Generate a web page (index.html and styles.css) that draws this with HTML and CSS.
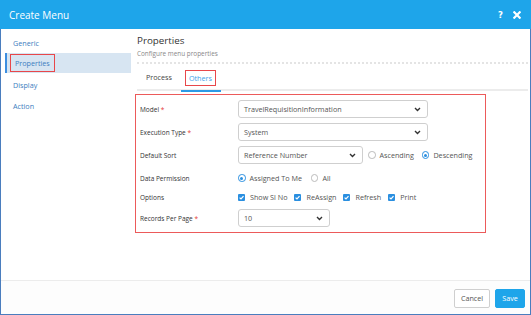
FILE: index.html
```html
<!DOCTYPE html>
<html>
<head>
<meta charset="utf-8">
<link rel="stylesheet" href="styles.css">
</head>
<body>
<div class="dialog">
  <div class="header">
    <span class="title">Create Menu</span>
    <span class="hicons">
      <span class="help">?</span>
      <svg class="close" width="8" height="8" viewBox="0 0 8 8"><path d="M1.3 1.3 L6.7 6.7 M6.7 1.3 L1.3 6.7" stroke="#fff" stroke-width="2.2" stroke-linecap="square"/></svg>
    </span>
  </div>
  <div class="body">
    <div class="nav">
      <div class="nav-item">Generic</div>
      <div class="nav-item active"><span class="mark">Properties</span></div>
      <div class="nav-item">Display</div>
      <div class="nav-item">Action</div>
    </div>
    <div class="content">
      <div class="page-title">Properties</div>
      <div class="page-sub">Configure menu properties</div>
      <div class="tabs">
        <div class="tab">Process</div>
        <div class="tab active"><span class="mark">Others</span></div>
      </div>
      <div class="form">
        <div class="row r1">
          <div class="label">Model <span class="req">*</span></div>
          <div class="select w190">TravelRequisitionInformation<svg class="chev" width="7" height="5" viewBox="0 0 7 5"><path d="M1 1 L3.5 3.5 L6 1" fill="none" stroke="#333" stroke-width="1.4"/></svg></div>
        </div>
        <div class="row r2">
          <div class="label">Execution Type <span class="req">*</span></div>
          <div class="select w190">System<svg class="chev" width="7" height="5" viewBox="0 0 7 5"><path d="M1 1 L3.5 3.5 L6 1" fill="none" stroke="#333" stroke-width="1.4"/></svg></div>
        </div>
        <div class="row r3">
          <div class="label">Default Sort</div>
          <div class="select w125">Reference Number<svg class="chev" width="7" height="5" viewBox="0 0 7 5"><path d="M1 1 L3.5 3.5 L6 1" fill="none" stroke="#333" stroke-width="1.4"/></svg></div>
          <label class="opt sort1"><span class="radio"></span>Ascending</label>
          <label class="opt"><span class="radio on"></span>Descending</label>
        </div>
        <div class="row r4">
          <div class="label">Data Permission</div>
          <label class="opt"><span class="radio on"></span>Assigned To Me</label>
          <label class="opt all"><span class="radio"></span>All</label>
        </div>
        <div class="row r5">
          <div class="label">Options</div>
          <label class="opt chk"><span class="check"><svg width="7" height="7" viewBox="0 0 7 7"><path d="M1.6 3.6 L3 5 L5.5 2.2" fill="none" stroke="#fff" stroke-width="1.2"/></svg></span>Show Sl No</label>
          <label class="opt chk"><span class="check"><svg width="7" height="7" viewBox="0 0 7 7"><path d="M1.6 3.6 L3 5 L5.5 2.2" fill="none" stroke="#fff" stroke-width="1.2"/></svg></span>ReAssign</label>
          <label class="opt chk"><span class="check"><svg width="7" height="7" viewBox="0 0 7 7"><path d="M1.6 3.6 L3 5 L5.5 2.2" fill="none" stroke="#fff" stroke-width="1.2"/></svg></span>Refresh</label>
          <label class="opt chk"><span class="check"><svg width="7" height="7" viewBox="0 0 7 7"><path d="M1.6 3.6 L3 5 L5.5 2.2" fill="none" stroke="#fff" stroke-width="1.2"/></svg></span>Print</label>
        </div>
        <div class="row r6">
          <div class="label">Records Per Page <span class="req">*</span></div>
          <div class="select w92">10<svg class="chev" width="7" height="5" viewBox="0 0 7 5"><path d="M1 1 L3.5 3.5 L6 1" fill="none" stroke="#333" stroke-width="1.4"/></svg></div>
        </div>
      </div>
    </div>
  </div>
  <div class="footer">
    <button class="btn cancel">Cancel</button>
    <button class="btn save">Save</button>
  </div>
</div>
</body>
</html>
```
FILE: styles.css
```css
* { box-sizing: border-box; }
html, body { margin: 0; padding: 0; background: #fff; }
body { width: 531px; height: 315px; overflow: hidden; font-family: "Open Sans", "Noto Sans", sans-serif; color: #333; }

.dialog {
  width: 531px; height: 315px;
  display: flex; flex-direction: column;
  border: 1px solid #4a7dbe; border-top: 0;
}
.header {
  height: 29px; flex: none;
  background: #1ea5ea;
  display: flex; align-items: center; justify-content: space-between;
  padding: 0 10px 0 9px;
  margin: 0 -1px;
}
.title { color: #fff; font-size: 10px; }
.hicons { display: flex; align-items: center; gap: 10px; }
.help { color: #fff; font-weight: bold; font-size: 8.5px; font-family: "DejaVu Sans", sans-serif; }
.close { display: block; }

.body { flex: 1; display: flex; }
.nav { width: 130px; flex: none; padding-top: 3px; }
.nav-item {
  height: 21px; display: flex; align-items: center;
  padding-left: 12px; font-size: 7.2px; color: #3d7ec0;
}
.nav-item.active {
  margin-left: 4px; padding-left: 3px;
  border-left: 2px solid #3d8ee0;
  background: #d7e5f2;
  height: 20px; margin-bottom: 1px;
}
.mark { border: 1px solid #e8474a; padding: 2px 4px 2px 4px; line-height: 12px; }
.nav-item .mark { padding: 2px 4px; }

.content { flex: 1; padding: 0 2px 0 6px; }
.page-title { font-size: 9.8px; color: #333; margin-top: 4px; line-height: 15px; }
.page-sub {
  font-size: 6.4px; color: #888; line-height: 10px; margin-top: 1px;
  padding-bottom: 3px; border-bottom: 2px dotted #e4e4e4;
}
.tabs {
  display: flex; height: 26px; align-items: center;
  border-bottom: 2px solid #ececec; margin-top: 1px;
}
.tab { font-size: 7.2px; color: #444; padding: 0 9px 0 9px; height: 100%; display: flex; align-items: center; }
.tab.active { color: #3ea2ea; padding: 0 5px 0 4px; box-shadow: inset 0 -2px 0 #2b9ae6; margin-bottom: -2px; height: 28px; }
.tab.active .mark { padding: 1px 3px; line-height: 12px; }

.form {
  width: 351px; margin-left: -2px; margin-top: 3px;
  border: 1px solid #ec5a5a;
  padding: 5px 4px 5px 4px;
}
.row { display: flex; align-items: center; height: 18px; }
.r2, .r3 { margin-top: 5px; }
.r4 { height: 20px; margin-top: 4px; }
.r5 { height: 18px; }
.r6 { margin-top: 3px; }
.label { width: 98px; flex: none; font-size: 6.5px; color: #333; }
.req { color: #e53935; }
.select {
  height: 18px; border: 1px solid #cfcfcf; border-radius: 3px;
  display: flex; align-items: center; justify-content: space-between;
  padding: 0 6px 0 5px; font-size: 7.2px; color: #555;
}
.w190 { width: 190px; }
.w125 { width: 125px; }
.w92 { width: 92px; }
.chev { display: block; }

.opt { display: flex; align-items: center; font-size: 7.2px; color: #555; }
.sort1 { margin-left: 5px; margin-right: 8px; }
.all { margin-left: 9px; }
.radio {
  width: 7.5px; height: 7.5px; border-radius: 50%;
  border: 1px solid #bbb; margin-right: 4px; flex: none;
  position: relative;
}
.radio.on { border-color: #2a8fe0; }
.radio.on::after {
  content: ""; position: absolute; left: 1.25px; top: 1.25px;
  width: 3px; height: 3px; border-radius: 50%; background: #2a8fe0;
}
.check {
  width: 7px; height: 7px; background: #2a8fe0; border-radius: 1px;
  margin-right: 5px; flex: none; display: flex;
}
.check svg { display: block; }
.chk + .chk { margin-left: 7px; }

.footer {
  height: 34px; flex: none;
  border-top: 1px solid #ececec; background: #fdfdfd;
  display: flex; justify-content: flex-end; align-items: center;
  gap: 5px; padding-right: 5px; padding-top: 1px;
}
.btn {
  height: 19px; font-family: inherit; font-size: 7.2px;
  border-radius: 2px; padding: 0; margin: 0;
}
.cancel { width: 36px; background: #fff; border: 1px solid #cfcfcf; color: #555; }
.save { width: 30px; background: #1ea5ea; border: 1px solid #1ea5ea; color: #fff; }
```
